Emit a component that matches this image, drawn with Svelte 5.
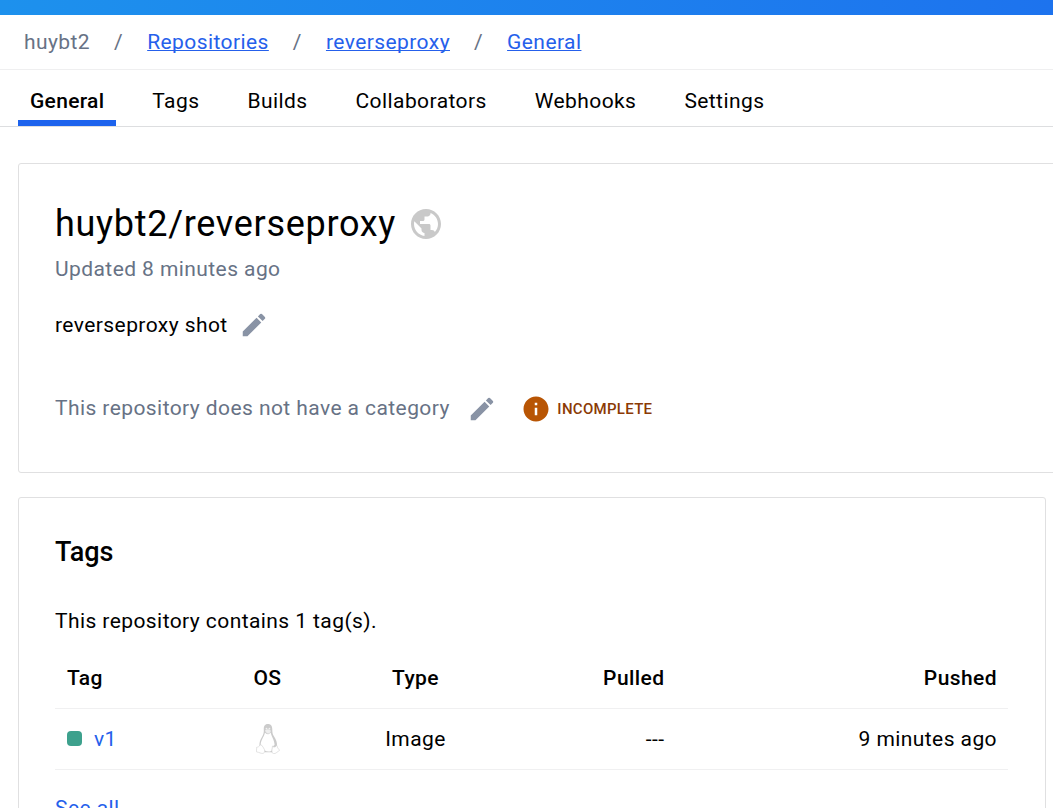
<script>
  const crumbs = ['Repositories', 'reverseproxy', 'General'];
  const tabs = ['General', 'Tags', 'Builds', 'Collaborators', 'Webhooks', 'Settings'];
  const pencil = 'M3 17.25V21h3.75L17.81 9.94l-3.75-3.75L3 17.25zM20.71 7.04c.39-.39.39-1.02 0-1.41l-2.34-2.34a.9959.9959 0 0 0-1.41 0l-1.83 1.83 3.75 3.75 1.83-1.83z';
</script>

<div class="page">
  <div class="topbar"></div>
  <nav class="crumbs">
    <span>huybt2</span>
    {#each crumbs as crumb}
      <span class="slash">/</span>
      <a href="#top">{crumb}</a>
    {/each}
  </nav>
  <div class="tabs">
    {#each tabs as tab, i}
      <div class="tab" class:active={i === 0}>{tab}</div>
    {/each}
  </div>

  <section class="card summary">
    <div class="title">
      <h1>huybt2/reverseproxy</h1>
      <svg class="globe" viewBox="0 0 24 24"><path d="M12 2C6.48 2 2 6.48 2 12s4.48 10 10 10 10-4.48 10-10S17.52 2 12 2zm-1 17.93c-3.95-.49-7-3.85-7-7.93 0-.62.08-1.21.21-1.79L9 15v1c0 1.1.9 2 2 2v1.93zm6.9-2.54c-.26-.81-1-1.39-1.9-1.39h-1v-3c0-.55-.45-1-1-1H8v-2h2c.55 0 1-.45 1-1V7h2c1.1 0 2-.9 2-2v-.41c2.93 1.19 5 4.06 5 7.41 0 2.08-.8 3.97-2.1 5.39z" /></svg>
    </div>
    <div class="updated">Updated 8 minutes ago</div>
    <div class="row description">
      <span>reverseproxy shot</span>
      <svg class="pencil" viewBox="0 0 24 24"><path d={pencil} /></svg>
    </div>
    <div class="row category">
      <span>This repository does not have a category</span>
      <div class="status">
        <svg class="pencil" viewBox="0 0 24 24"><path d={pencil} /></svg>
        <svg class="info" viewBox="0 0 24 24"><path d="M12 2C6.48 2 2 6.48 2 12s4.48 10 10 10 10-4.48 10-10S17.52 2 12 2zm1 15h-2v-6h2v6zm0-8h-2V7h2v2z" /></svg>
        <strong>INCOMPLETE</strong>
      </div>
    </div>
  </section>

  <section class="card tags">
    <h2>Tags</h2>
    <p>This repository contains 1 tag(s).</p>
    <div class="line head">
      <span>Tag</span><span class="mid">OS</span><span class="mid">Type</span><span class="right">Pulled</span><span class="right">Pushed</span>
    </div>
    <div class="line">
      <span class="tag"><i></i><a href="#v1">v1</a></span>
      <span class="mid">
        <svg class="tux" viewBox="0 0 24 30">
          <path d="M12 0C8.500 0 7.600 2.500 7.800 6c.2 3-.6 4.700-2 7.200C4.200 16 3.200 18.500 3.500 21.500L8.500 28.300h7.500l5-6.300c.3-3.500-1-6.500-2.900-9.500-1.400-2-1.800-3.700-1.800-6.500C16.300 2 15 0 12 0z" fill="#cbcbcb" />
          <path d="M9 8.500c1.800 2.200 3.700 2.200 5.700-.1.300 3.400 3.700 6.900 3.900 12.600l-2.100 1.500-.9 4.200c-2.200 1.300-4.800 1.200-6.900-.2l-4-5.800c.1-4.700 3.400-7.700 4.300-12.200z" fill="#fff" />
          <path d="M9.100 6.300 12 5.200l2.800 1.200c.2 1.500-1.200 2.600-2.800 3.300-1.600-.6-2.800-1.700-2.900-3.400z" fill="#eee" />
          <circle cx="10.500" cy="4.700" r=".9" fill="#f2f2f2" /><circle cx="13.400" cy="4.700" r=".9" fill="#f2f2f2" />
          <path d="M4.500 20.700c1.400.2 2.300 2 3.300 3.700 1.200 1.900 1.500 4.300-.9 5-2 .3-3.500-1.100-6.300-1.500-.5-1.300.3-2.400 0-4.500 1.400-.5 2.500-.5 3.900-2.700zM16.500 22c.9 1.500 2.900 1.500 4.200-.6.8.2.5 1.800 1.100 2.800.7 1 1.700 1.200 1.800 2.200-2 1.100-3.600 3.300-5.800 3.300-2.500-.2-2-3.500-1.300-7.700z" fill="#fff" stroke="#d0d0d0" stroke-width=".6" />
        </svg>
      </span>
      <span class="mid">Image</span><span class="right">---</span><span class="right">9 minutes ago</span>
    </div>
    <a class="all" href="#all">See all</a>
  </section>
</div>

<style>
  :global(body) { overflow: hidden; background: #fff; }
  .page {
    height: 808px;
    overflow: hidden;
    font: 400 21px/30px Roboto, sans-serif;
    letter-spacing: 0.42px;
    color: #000;
  }
  h1, h2, p { margin: 0; }
  a { color: #2560eb; text-decoration: none; }
  svg { display: block; flex: none; }
  .topbar { height: 15px; background: linear-gradient(90deg, #1d91ed, #1d73ee); }
  .crumbs {
    box-sizing: border-box;
    height: 55px;
    padding: 12px 24px 0;
    display: flex;
    color: #677285;
    border-bottom: 1px solid #efeff0;
  }
  .crumbs a { text-decoration: underline; text-decoration-thickness: 1px; text-underline-offset: 1px; text-decoration-skip-ink: none; }
  .slash { margin: 0 24px; }
  .tabs {
    box-sizing: border-box;
    height: 57px;
    padding-left: 18px;
    display: flex;
    gap: 24px;
    border-bottom: 1px solid #dddee0;
  }
  .tab { box-sizing: border-box; height: 56px; padding: 16px 12px 0; }
  .active { font-weight: 500; letter-spacing: 0.3px; border-bottom: 6px solid #1d63ed; }
  .card { box-sizing: border-box; margin-left: 18px; border: 1px solid #e0e0e1; border-radius: 3px; padding-left: 36px; }
  .summary { margin-top: 36px; width: 1060px; height: 310px; padding-top: 38px; }
  .title { display: flex; align-items: center; height: 44px; gap: 12px; }
  h1 { font-size: 36px; line-height: 44px; font-weight: 400; letter-spacing: 0.7px; }
  .globe { width: 36px; height: 36px; fill: #c9c9c9; }
  .updated { margin-top: 8px; color: #677285; }
  .row { display: flex; align-items: center; height: 30px; }
  .description { margin-top: 26px; }
  .description .pencil { margin-left: 11px; }
  .pencil { width: 30px; height: 30px; fill: #8993a5; }
  .category { margin-top: 53px; color: #677285; }
  .status { display: flex; align-items: center; padding-top: 2px; }
  .category .pencil { margin-left: 17px; }
  .info { width: 30px; height: 30px; margin-left: 24px; fill: #b85504; }
  strong { margin-left: 6.5px; font-size: 15px; font-weight: 500; letter-spacing: 0.3px; color: #8b3a05; }
  .tags { margin-top: 24px; width: 1028px; height: 400px; padding: 36px 37px 0 36px; }
  h2 { font-size: 27px; line-height: 36px; font-weight: 500; letter-spacing: 0; }
  p { margin-top: 36px; }
  .line {
    box-sizing: border-box;
    height: 61px;
    display: grid;
    align-items: center;
    grid-template-columns: 126.5px 148px 148px 175px 1fr;
    padding: 0 11px 0 12px;
    border-bottom: 1px solid #f0f0f1;
  }
  .head { margin-top: 12px; font-weight: 500; }
  .mid { text-align: center; }
  .right { text-align: right; }
  .tag { display: flex; align-items: center; gap: 12px; }
  i { width: 15px; height: 15px; margin-bottom: 1px; border-radius: 4px; background: #3da18d; }
  .tux { width: 24px; height: 30px; margin: auto; }
  .all { display: block; margin-top: 23px; }
</style>
